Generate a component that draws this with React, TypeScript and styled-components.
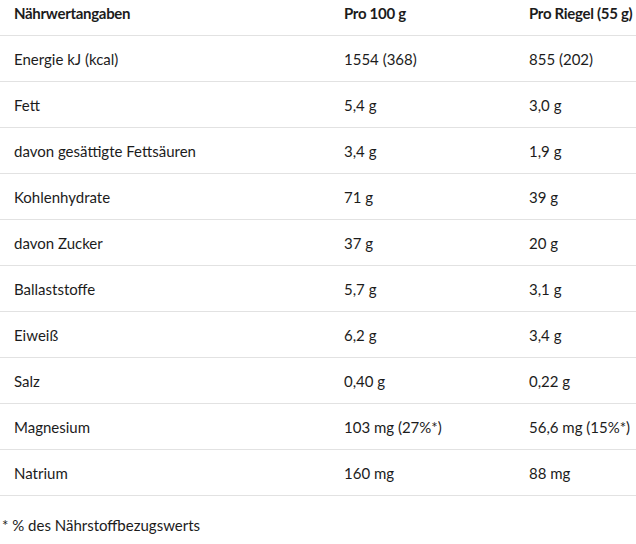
import styled, { createGlobalStyle } from 'styled-components';

const GlobalStyle = createGlobalStyle`
  html, body {
    margin: 0;
    padding: 0;
    background: #ffffff;
  }
  body {
    font-family: Lato, "Noto Sans", sans-serif;
    color: #1c1c1c;
    -webkit-font-smoothing: antialiased;
  }
`;

const Wrapper = styled.div`
  width: 636px;
  margin-top: -10px;
`;

const Table = styled.table`
  width: 636px;
  border-collapse: collapse;
  table-layout: fixed;
  font-size: 15px;
`;

// widths are content widths; each cell adds 14px left padding
const HeadCell = styled.th<{ $width?: number }>`
  width: ${(p) => (p.$width ? `${p.$width}px` : 'auto')};
  height: 45px;
  padding: 0 0 0 14px;
  text-align: left;
  font-weight: 700;
  letter-spacing: -0.3px;
  border-bottom: 1px solid #e2e2e2;
  white-space: nowrap;
`;

const Cell = styled.td`
  height: 45px;
  padding: 0 0 0 14px;
  text-align: left;
  font-weight: 400;
  border-bottom: 1px solid #e2e2e2;
  white-space: nowrap;
`;

const Footnote = styled.p`
  margin: 20px 0 0 2px;
  font-size: 15px;
  line-height: 18px;
`;

const rows: [string, string, string][] = [
  ['Energie kJ (kcal)', '1554 (368)', '855 (202)'],
  ['Fett', '5,4 g', '3,0 g'],
  ['davon gesättigte Fettsäuren', '3,4 g', '1,9 g'],
  ['Kohlenhydrate', '71 g', '39 g'],
  ['davon Zucker', '37 g', '20 g'],
  ['Ballaststoffe', '5,7 g', '3,1 g'],
  ['Eiweiß', '6,2 g', '3,4 g'],
  ['Salz', '0,40 g', '0,22 g'],
  ['Magnesium', '103 mg (27%*)', '56,6 mg (15%*)'],
  ['Natrium', '160 mg', '88 mg'],
];

export default function App() {
  return (
    <>
      <GlobalStyle />
      <Wrapper>
        <Table>
          <thead>
            <tr>
              <HeadCell $width={316}>Nährwertangaben</HeadCell>
              <HeadCell $width={171}>Pro 100 g</HeadCell>
              <HeadCell>Pro Riegel (55 g)</HeadCell>
            </tr>
          </thead>
          <tbody>
            {rows.map(([name, per100, perBar]) => (
              <tr key={name}>
                <Cell>{name}</Cell>
                <Cell>{per100}</Cell>
                <Cell>{perBar}</Cell>
              </tr>
            ))}
          </tbody>
        </Table>
        <Footnote>* % des Nährstoffbezugswerts</Footnote>
      </Wrapper>
    </>
  );
}
